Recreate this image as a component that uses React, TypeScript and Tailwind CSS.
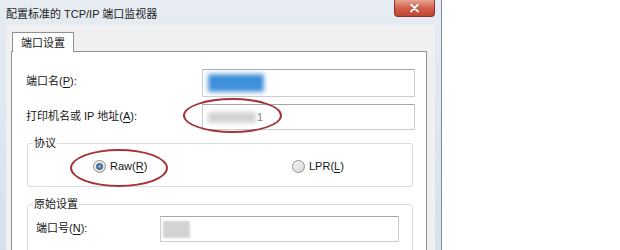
import React from 'react';

function U({ children }: { children: React.ReactNode }) {
  return <span className="underline underline-offset-[2px] decoration-[1px]">{children}</span>;
}

function Radio({ checked }: { checked?: boolean }) {
  return (
    <span className="w-[13px] h-[13px] shrink-0 rounded-full border border-[#8f9396] bg-linear-to-br from-[#f7f7f7] to-[#d4d6d8] flex items-center justify-center">
      {checked && (
        <span className="w-[7px] h-[7px] rounded-full bg-radial from-[#9cc3e6] to-[#1f4e7e] border border-[#2c4f73]" />
      )}
    </span>
  );
}

function Input({ className, children }: { className: string; children?: React.ReactNode }) {
  return (
    <div
      className={`border border-[#c9cdd4] border-t-[#a3a8b0] bg-white flex items-center ${className}`}
    >
      {children}
    </div>
  );
}

export default function App() {
  return (
    <div className="relative w-[620px] h-[250px] overflow-hidden bg-white text-[11px] leading-[14px] text-[#161616] font-['Liberation_Sans','Noto_Sans_CJK_SC',sans-serif]">
      {/* window */}
      <div className="w-[442px] h-[250px] flex flex-col bg-linear-to-b from-[#e6ecf2] to-[#d6e1ec] border-r border-[#7f8c9a]">
        {/* title bar */}
        <div className="h-[25px] shrink-0 flex justify-between">
          <div className="pl-[6px] pt-[7px] text-[#222]">配置标准的 TCP/IP 端口监视器</div>
          <div className="mr-[6px] w-[41px] h-[17px] rounded-b-[4px] border border-t-0 border-[#86352c] bg-linear-to-b from-[#e9a391] via-[#d2604d] to-[#c2432f] flex items-center justify-center">
            <svg width="11" height="10" viewBox="0 0 11 10">
              <path d="M2 1.5 L9 8.5 M9 1.5 L2 8.5" stroke="#5a1d16" strokeWidth="3" strokeLinecap="round" opacity="0.35" />
              <path d="M2 1.5 L9 8.5 M9 1.5 L2 8.5" stroke="#ffffff" strokeWidth="2" strokeLinecap="round" />
            </svg>
          </div>
        </div>

        {/* client area */}
        <div className="flex-1 mx-[6px] bg-[#f0f0f0] pt-[7px] pl-[5px] pr-[8px] flex flex-col">
          <div className="flex">
            <div className="ml-[1px] h-[20px] px-[8px] -mb-px relative z-10 border border-b-0 border-[#8d9097] bg-white flex items-center">
              端口设置
            </div>
          </div>

          <div className="flex-1 border border-[#8d9097] bg-white pt-[17px] pl-[14px] pr-[11px]">
            <div className="flex items-center h-[28px]">
              <div className="w-[176px] pb-[4px]">
                端口名(<U>P</U>):
              </div>
              <Input className="flex-1 h-[28px] pl-[4px]">
                <div className="w-[58px] h-[20px] bg-[#b9d3ec] blur-[2px] flex items-center justify-center">
                  <div className="w-[54px] h-[16px] bg-[#3f8fdb]" />
                </div>
              </Input>
            </div>

            <div className="flex items-center h-[26px] mt-[7px]">
              <div className="w-[176px] pb-[3px]">
                打印机名或 IP 地址(<U>A</U>):
              </div>
              <Input className="flex-1 h-[26px] pl-[5px]">
                <div className="w-[48px] h-[11px] bg-[#d4d4d4] blur-[2px]" />
                <span className="ml-[1px] text-[#7d7d7d] blur-[0.4px]">1</span>
              </Input>
            </div>

            <fieldset className="mt-[5px] ml-[1px] mr-[2px] border border-[#d5dde3] rounded-[3px]">
              <legend className="ml-[5px] px-[1px] leading-[16px]">协议</legend>
              <div className="h-[30px] mb-[5px] flex items-center pl-[65px]">
                <div className="w-[199px] flex items-center gap-[4px]">
                  <Radio checked />
                  <span>
                    Raw(<U>R</U>)
                  </span>
                </div>
                <div className="flex items-center gap-[4px]">
                  <Radio />
                  <span>
                    LPR(<U>L</U>)
                  </span>
                </div>
              </div>
            </fieldset>

            <fieldset className="mt-[9px] ml-[1px] mr-[2px] border border-[#d5dde3] rounded-[3px] pb-[10px]">
              <legend className="ml-[5px] px-[1px] leading-[16px]">原始设置</legend>
              <div className="mt-[4px] flex items-center h-[26px] pl-[8px] pr-[13px]">
                <div className="w-[124px] pb-[3px]">
                  端口号(<U>N</U>):
                </div>
                <Input className="w-[239px] h-[26px] pl-[2px]">
                  <div className="w-[27px] h-[17px] bg-[#d3d3d3] blur-[1px]" />
                </Input>
              </div>
            </fieldset>
          </div>
        </div>
      </div>

      {/* red annotation ellipses */}
      <div className="absolute left-[183px] top-[98px] w-[99px] h-[35px] rounded-[50%] border-[2.5px] border-[#a5343a] blur-[0.3px]" />
      <div className="absolute left-[70px] top-[149px] w-[98px] h-[38px] rounded-[50%] border-[2.5px] border-[#a5343a] blur-[0.3px]" />
    </div>
  );
}
